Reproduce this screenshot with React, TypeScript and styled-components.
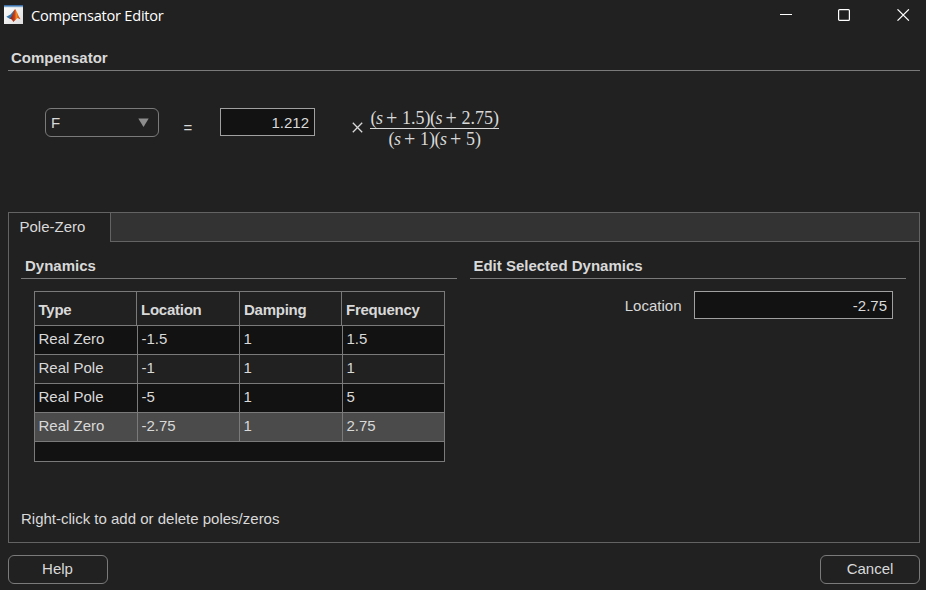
import React from 'react';
import styled, { createGlobalStyle } from 'styled-components';

const GlobalStyle = createGlobalStyle`
  * { box-sizing: border-box; }
  body { margin: 0; background: #212121; }
`;

const Window = styled.div`
  width: 926px;
  height: 590px;
  overflow: hidden;
  background: #212121;
  color: #d9d9d9;
  font: 15px/18px 'Liberation Sans', Arial, sans-serif;
  display: flex;
  flex-direction: column;
`;

const TitleBar = styled.header`
  height: 32px;
  flex: none;
  display: flex;
  align-items: flex-start;
  padding: 5px 16px 0 4px;
`;

const Title = styled.h1`
  margin: 0 0 0 7px;
  flex: 1;
  font: 400 14.6px/20px 'Open Sans', sans-serif;
  letter-spacing: -0.25px;
  color: #fff;
`;

const WindowControls = styled.div`
  display: flex;
  gap: 45px;
  padding-top: 4px;
`;

const Heading = styled.h2<{ $inset: number }>`
  margin: 0;
  height: 22px;
  padding-left: ${(p) => p.$inset}px;
  border-bottom: 1px solid #7a7a7a;
  font-size: 15px;
  line-height: 18px;
  font-weight: 700;
`;

const CompensatorSection = styled.section`
  flex: none;
  height: 180px;
  padding: 17px 6px 0 8px;
`;

const FormulaRow = styled.div`
  display: flex;
  align-items: flex-start;
  padding: 37px 0 0 37px;
`;

const Select = styled.button`
  width: 114px;
  height: 29px;
  padding: 0 9px 0 5px;
  display: flex;
  align-items: center;
  justify-content: space-between;
  font: inherit;
  color: inherit;
  background: #212121;
  border: 1px solid #7a7a7a;
  border-radius: 6px;
`;

const Equals = styled.span`
  width: 61px;
  padding: 11px 0 0 24.5px;
`;

const NumberInput = styled.input<{ $width: number }>`
  width: ${(p) => p.$width}px;
  height: 28px;
  padding: 0 5px 0 0;
  background: #121212;
  border: 1px solid #a0a0a0;
  border-radius: 0;
  color: #d9d9d9;
  font: inherit;
  text-align: right;
  outline: none;
`;

const Times = styled.svg`
  margin: 14px 7px 0 37px;
`;

const Fraction = styled.div`
  width: 129px;
  font: 18px/20px 'Liberation Serif', 'Times New Roman', serif;
  text-align: center;
  white-space: nowrap;
`;

const Numerator = styled.div`
  height: 21px;
  border-bottom: 1px solid #d9d9d9;
`;

const Factors = styled.div`
  display: flex;
  justify-content: center;
`;

const Paren = styled.span`
  width: 5.5px;
`;

const Variable = styled.i`
  width: 10px;
  text-align: left;
`;

const Operator = styled.span`
  width: 16px;
  font-size: 20px;
  text-align: left;
`;

const TabPanel = styled.main`
  flex: none;
  height: 331px;
  margin: 0 6px 0 8px;
  border: 1px solid #636363;
`;

const TabStrip = styled.div`
  display: flex;
  height: 29px;
`;

const Tab = styled.div`
  width: 102px;
  padding: 5px 0 0 10.5px;
  border-right: 1px solid #636363;
`;

const TabFiller = styled.div`
  flex: 1;
  background: #333;
  border-bottom: 1px solid #636363;
`;

const Columns = styled.div`
  display: grid;
  grid-template-columns: 436px 436px;
  gap: 13px;
  height: 268px;
  padding: 15px 0 0 12px;
`;

const DynamicsTable = styled.div`
  width: 411px;
  height: 171px;
  margin: 12px 0 0 13px;
  border: 1px solid #7a7a7a;
  background: #121212;
`;

const HeaderRow = styled.div`
  display: grid;
  grid-template-columns: 102px 103px 102px 102px;
  height: 34px;
  background: #212121;
  border-bottom: 1px solid #7a7a7a;
  font-weight: 700;
  letter-spacing: -0.25px;
`;

const Row = styled.div<{ $tone: string }>`
  display: grid;
  grid-template-columns: 103px 102px 103px 101px;
  height: 29px;
  background: ${(p) => p.$tone};
  border-bottom: 1px solid #7a7a7a;
`;

const Cell = styled.div<{ $top: number; $left: number }>`
  padding: ${(p) => p.$top}px 0 0 ${(p) => p.$left}px;
  border-right: 1px solid #7a7a7a;
  &:last-child { border-right: 0; }
`;

const Field = styled.label`
  display: flex;
  justify-content: flex-end;
  gap: 12.5px;
  padding: 12px 13px 0 0;
  line-height: 29px;
`;

const Hint = styled.p`
  margin: 0 0 0 12px;
`;

const Footer = styled.footer`
  display: flex;
  justify-content: space-between;
  padding: 12px 6px 0 8px;
`;

const Button = styled.button<{ $nudge?: number }>`
  width: 100px;
  height: 29px;
  padding: 0 ${(p) => p.$nudge ?? 0}px 2px 0;
  font: inherit;
  color: inherit;
  background: #212121;
  border: 1px solid #7a7a7a;
  border-radius: 6px;
`;

const columns = ['Type', 'Location', 'Damping', 'Frequency'];
const dynamics = [
  { values: ['Real Zero', '-1.5', '1', '1.5'], tone: '#121212' },
  { values: ['Real Pole', '-1', '1', '1'], tone: '#212121' },
  { values: ['Real Pole', '-5', '1', '5'], tone: '#121212' },
  { values: ['Real Zero', '-2.75', '1', '2.75'], tone: '#4b4b4b' },
];

const Factor = ({ value }: { value: string }) => (
  <>
    <Paren>(</Paren>
    <Variable>s</Variable>
    <Operator>+</Operator>
    <span>{value}</span>
    <Paren>)</Paren>
  </>
);

const AppIcon = () => (
  <svg width="20" height="20" viewBox="0 0 20 20">
    <defs>
      <linearGradient id="paper" x1="0" y1="0" x2="1" y2="1">
        <stop offset="0" stopColor="#fff" />
        <stop offset="1" stopColor="#dedede" />
      </linearGradient>
      <linearGradient id="flame">
        <stop offset="0" stopColor="#7a1d1a" />
        <stop offset=".45" stopColor="#c9421a" />
        <stop offset=".62" stopColor="#f28a20" />
        <stop offset="1" stopColor="#b52c16" />
      </linearGradient>
    </defs>
    <path d="M0 0h19v19H0z" fill="url(#paper)" />
    <path d="M0 0h19v1H0z" fill="#3d6ea5" />
    <path d="M0 1h19v1.2H0z" fill="#7aa3cc" />
    <path d="M2.3 11.7 6.5 9.5 10.8 4.5 9.5 12 6 14z" fill="#3477ad" />
    <path d="M5.8 13.5C8.5 12 9.3 6 11.1 4.1 13 6 14 11 16.5 14.2L13.5 13 9.3 17C8.5 15 7.5 14 5.8 13.5z" fill="url(#flame)" />
  </svg>
);

export default function App() {
  return (
    <Window>
      <GlobalStyle />
      <TitleBar>
        <AppIcon />
        <Title>Compensator Editor</Title>
        <WindowControls>
          <svg width="13" height="12"><path d="M0 5.5h12" stroke="#fff" /></svg>
          <svg width="14" height="12">
            <rect x=".6" y=".6" width="10.8" height="10.8" rx="1" fill="none" stroke="#fff" strokeWidth="1.2" />
          </svg>
          <svg width="13" height="12"><path d="m.5.3 11.4 11.4M11.9.3.5 11.7" stroke="#fff" strokeWidth="1.15" /></svg>
        </WindowControls>
      </TitleBar>
      <CompensatorSection>
        <Heading $inset={3}>Compensator</Heading>
        <FormulaRow>
          <Select>
            F
            <svg width="11" height="9"><path d="M.3.5h10.4L5.5 9z" fill="#8c8c8c" /></svg>
          </Select>
          <Equals>=</Equals>
          <NumberInput $width={95} defaultValue="1.212" />
          <Times width="11" height="11"><path d="m.8.8 9.4 9.4m0-9.4L.8 10.2" stroke="#d9d9d9" strokeWidth="1.3" /></Times>
          <Fraction>
            <Numerator><Factors><Factor value="1.5" /><Factor value="2.75" /></Factors></Numerator>
            <Factors><Factor value="1" /><Factor value="5" /></Factors>
          </Fraction>
        </FormulaRow>
      </CompensatorSection>
      <TabPanel>
        <TabStrip>
          <Tab>Pole-Zero</Tab>
          <TabFiller />
        </TabStrip>
        <Columns>
          <section>
            <Heading $inset={4}>Dynamics</Heading>
            <DynamicsTable>
              <HeaderRow>
                {columns.map((name, i) => <Cell key={name} $top={9} $left={i === 0 ? 3.5 : 4}>{name}</Cell>)}
              </HeaderRow>
              {dynamics.map((row, i) => (
                <Row key={i} $tone={row.tone}>
                  {row.values.map((value, j) => <Cell key={j} $top={4} $left={3.5}>{value}</Cell>)}
                </Row>
              ))}
            </DynamicsTable>
          </section>
          <section>
            <Heading $inset={3.4}>Edit Selected Dynamics</Heading>
            <Field>
              Location
              <NumberInput $width={199} defaultValue="-2.75" />
            </Field>
          </section>
        </Columns>
        <Hint>Right-click to add or delete poles/zeros</Hint>
      </TabPanel>
      <Footer>
        <Button $nudge={1}>Help</Button>
        <Button>Cancel</Button>
      </Footer>
    </Window>
  );
}
